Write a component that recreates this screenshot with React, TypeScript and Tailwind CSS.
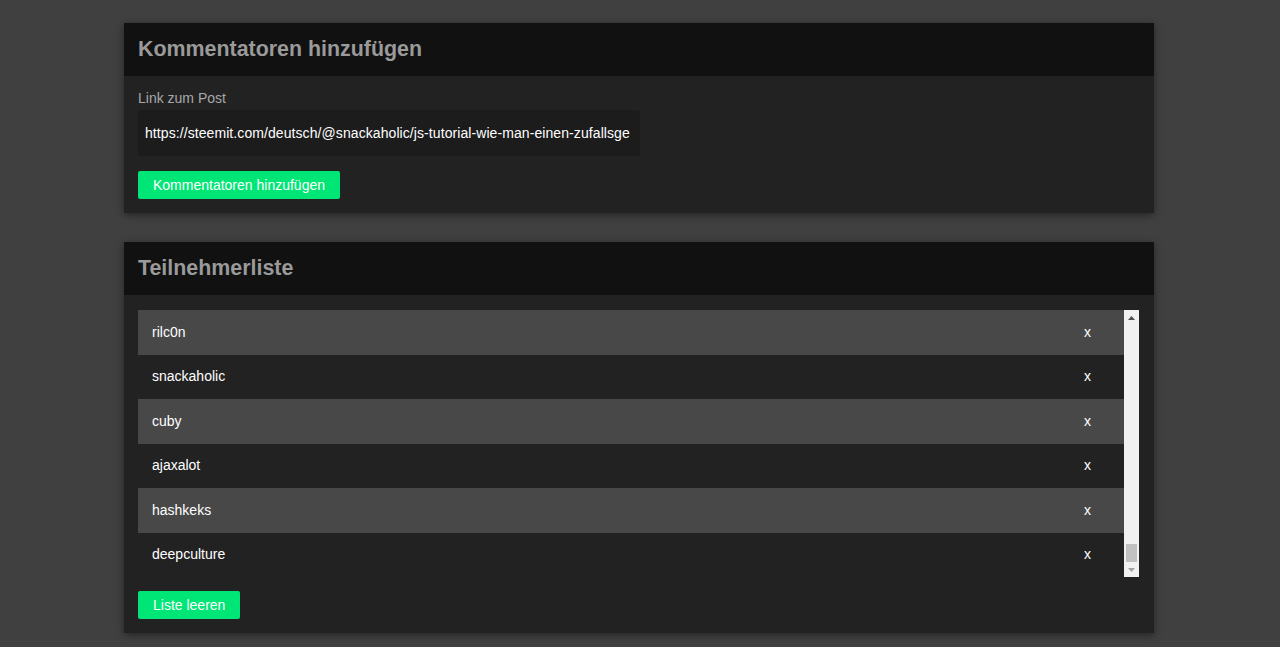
import React from 'react';

const participants = ['rilc0n', 'snackaholic', 'cuby', 'ajaxalot', 'hashkeks', 'deepculture'];

const Card: React.FC<{ title: string; children: React.ReactNode; bodyClass?: string }> = ({ title, children, bodyClass }) => (
  <section className="w-[1030px] bg-[#222222] shadow-[0_2px_8px_rgba(0,0,0,0.45)]">
    <header className="h-[53px] flex items-center px-[14px] bg-[#111111]">
      <h2 className="text-[21.4px] font-bold text-[#9a9a9a] leading-none">{title}</h2>
    </header>
    <div className={bodyClass}>{children}</div>
  </section>
);

const ScrollbarArrow: React.FC<{ up?: boolean }> = ({ up }) => (
  <div className="h-[15px] flex items-center justify-center">
    <svg width="7" height="4" viewBox="0 0 7 4">
      <path d={up ? 'M0 4L3.5 0L7 4Z' : 'M0 0L3.5 4L7 0Z'} fill={up ? '#505050' : '#a3a3a3'} />
    </svg>
  </div>
);

const App: React.FC = () => {
  return (
    <div
      className="min-h-[647px] bg-[#404040] flex flex-col items-start pl-[124px] pt-[23px] gap-[29px] text-white"
      style={{ fontFamily: '"Liberation Sans", Arial, sans-serif' }}
    >
      {/* Kommentatoren hinzufügen */}
      <Card title="Kommentatoren hinzufügen" bodyClass="px-[14px] pt-[14px] pb-[14px]">
        <label className="block text-[14px] leading-4 text-[#a8a8a8]">Link zum Post</label>
        <div className="mt-[4px] w-[502px] h-[46px] bg-[#1c1c1c] flex items-center px-[7px] overflow-hidden rounded-[2px]">
          <span className="text-[14px] tracking-[0.08px] whitespace-nowrap text-white">
            https://steemit.com/deutsch/@snackaholic/js-tutorial-wie-man-einen-zufallsge
          </span>
        </div>
        <button className="mt-[15px] h-[28px] px-[15px] bg-[#00e676] text-white text-[14px] rounded-[2px]">
          Kommentatoren hinzufügen
        </button>
      </Card>

      {/* Teilnehmerliste */}
      <Card title="Teilnehmerliste" bodyClass="px-[14px] pt-[15px] pb-[14px]">
        <div className="flex h-[267px]">
          <ul className="w-[986px] flex flex-col">
            {participants.map((name, i) => (
              <li
                key={name}
                className={`h-[44.5px] flex items-center justify-between pl-[14px] pr-[33px] text-[14px] ${
                  i % 2 === 0 ? 'bg-[#484848]' : 'bg-[#222222]'
                }`}
              >
                <span>{name}</span>
                <span className="text-[14px]">x</span>
              </li>
            ))}
          </ul>
          <div className="w-[15px] bg-[#f1f1f1] flex flex-col">
            <ScrollbarArrow up />
            <div className="flex-1 flex flex-col justify-end px-[2px]">
              <div className="h-[18px] bg-[#c1c1c1]" />
            </div>
            <ScrollbarArrow />
          </div>
        </div>
        <button className="mt-[14px] h-[28px] px-[15px] bg-[#00e676] text-white text-[14px] rounded-[2px]">
          Liste leeren
        </button>
      </Card>
    </div>
  );
};

export default App;
